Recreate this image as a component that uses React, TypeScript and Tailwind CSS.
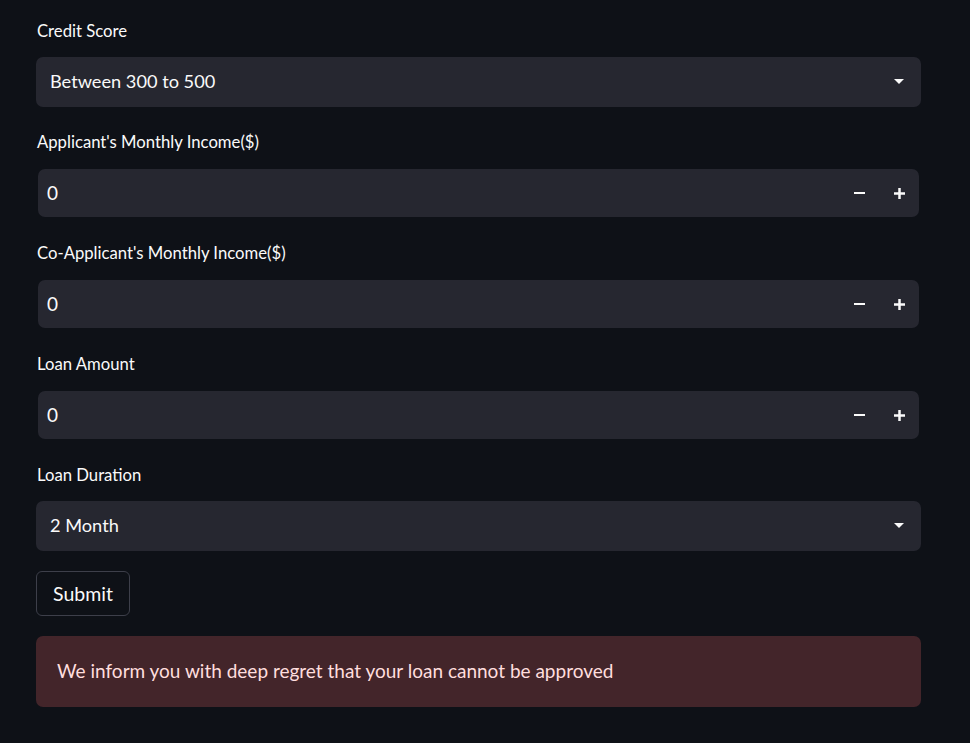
import React from "react";

const font = { fontFamily: "Lato, 'Noto Sans', sans-serif" };

function Caret() {
  return (
    <svg width="10" height="6" viewBox="0 0 10 6" className="shrink-0">
      <path d="M0 0 L10 0 L5 5 Z" fill="#fafafa" />
    </svg>
  );
}

function SelectBox({ label, value }: { label: string; value: string }) {
  return (
    <div className="flex flex-col">
      <div className="h-[26px] flex items-center text-[16.7px] text-[#fafafa] pl-[1px] pt-[2px]">{label}</div>
      <div className="mt-[13px] h-[50px] bg-[#262730] rounded-[7px] flex items-center justify-between pl-[14px] pr-[17px]">
        <span className="text-[18.2px] text-[#fafafa]">{value}</span>
        <Caret />
      </div>
    </div>
  );
}

function NumberBox({ label }: { label: string }) {
  return (
    <div className="flex flex-col">
      <div className="h-[26px] flex items-center text-[16.7px] text-[#fafafa] pl-[1px] pt-[2px]">{label}</div>
      <div className="mt-[14px] mx-[2px] h-[48px] bg-[#262730] rounded-[7px] flex items-center pl-[9px]">
        <span className="flex-1 text-[19px] text-[#fafafa]">0</span>
        <div className="flex items-center h-full">
          <div className="w-[40px] h-full flex items-center justify-center">
            <div className="w-[11px] h-[2.5px] bg-[#fafafa]" />
          </div>
          <div className="w-[40px] h-full flex items-center justify-center">
            <svg width="11" height="11" viewBox="0 0 11 11">
              <rect x="0" y="4.25" width="11" height="2.5" fill="#fafafa" />
              <rect x="4.25" y="0" width="2.5" height="11" fill="#fafafa" />
            </svg>
          </div>
        </div>
      </div>
    </div>
  );
}

export default function App() {
  return (
    <div className="min-h-[743px] w-full bg-[#0e1117]" style={font}>
      <div className="pl-[36px] pr-[49px] pt-[18px] flex flex-col">
        <SelectBox label="Credit Score" value="Between 300 to 500" />
        <div className="h-[22px]" />
        <NumberBox label="Applicant's Monthly Income($)" />
        <div className="h-[23px]" />
        <NumberBox label="Co-Applicant's Monthly Income($)" />
        <div className="h-[23px]" />
        <NumberBox label="Loan Amount" />
        <div className="h-[23px]" />
        <SelectBox label="Loan Duration" value="2 Month" />
        <div className="h-[20px]" />
        <div>
          <button className="h-[45px] px-[16px] border border-[#3d3f4a] rounded-[6px] bg-[#0e1117] text-[19.5px] text-[#fafafa]">
            Submit
          </button>
        </div>
        <div className="h-[20px]" />
        <div className="h-[71px] bg-[#43252a] rounded-[7px] flex items-center px-[21px] text-[19px] text-[#ffdede]">
          We inform you with deep regret that your loan cannot be approved
        </div>
      </div>
    </div>
  );
}
